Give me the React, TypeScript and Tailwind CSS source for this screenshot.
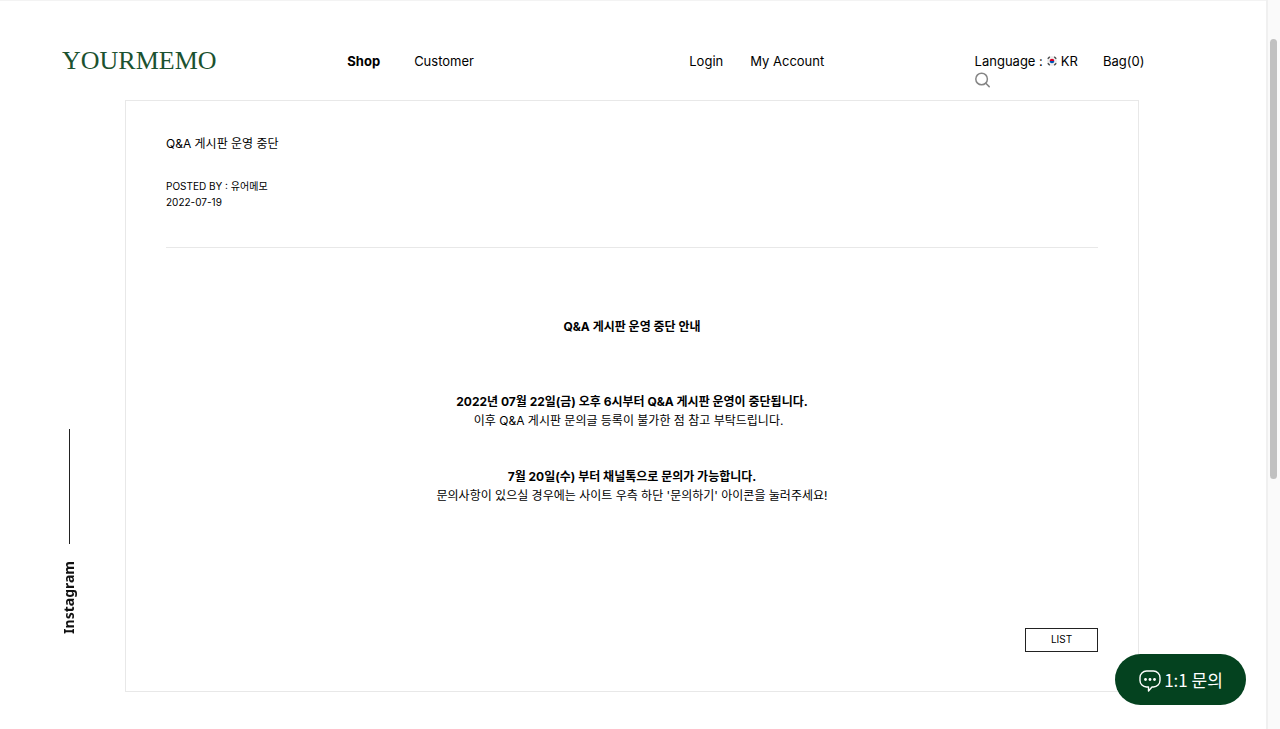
function KoreanFlag() {
  return (
    <svg className="h-[10px] w-[10px]" viewBox="0 0 20 20" aria-hidden="true">
      <circle cx="10" cy="10" r="10" fill="#eeeeee" />
      <path d="M5.300 10a4.700 4.700 0 0 1 9.400 0z" fill="#d80027" />
      <path d="M14.700 10a4.700 4.700 0 0 1-9.400 0z" fill="#0052b4" />
      <g stroke="#444" strokeWidth="2.600">
        <path d="M1.500 5.500 5.500 1.500M14.500 1.500l4 4M1.500 14.500l4 4M14.500 18.500l4-4" />
      </g>
    </svg>
  );
}

function SearchIcon() {
  return (
    <svg className="h-4 w-4" viewBox="0 0 16 16" fill="none" stroke="#858585" strokeWidth="1.500" aria-hidden="true">
      <circle cx="6.600" cy="7" r="5.800" />
      <path d="m10.800 11.200 3.400 3.400" strokeLinecap="round" />
    </svg>
  );
}

function ChatIcon() {
  return (
    <svg className="h-6 w-6" viewBox="0 0 24 24" fill="none" aria-hidden="true">
      <path
        d="M8.500 3h7a6.500 6.500 0 0 1 6.500 6.500v3a6.500 6.500 0 0 1-6.500 6.500h-1.500L10.500 23v-4h-2A6.500 6.500 0 0 1 2 12.500v-3A6.500 6.500 0 0 1 8.500 3z"
        stroke="#fff"
        strokeWidth="1.400"
        strokeLinejoin="round"
      />
      <g fill="#fff">
        <circle cx="7.500" cy="11.500" r="1.400" />
        <circle cx="12" cy="11.500" r="1.400" />
        <circle cx="16.500" cy="11.500" r="1.400" />
      </g>
    </svg>
  );
}

function Header() {
  return (
    <header className="flex h-[99px] items-start pt-[49px] pl-[62px] text-[13px] leading-[22px]">
      <a
        href="#home"
        className="w-[23.700%] font-['Liberation_Serif',serif] text-[26px] text-[#1b5230]"
      >
        YOURMEMO
      </a>
      <nav className="flex w-[28.400%] gap-[34px]" aria-label="Main">
        <a href="#shop" className="font-bold">Shop</a>
        <a href="#customer">Customer</a>
      </nav>
      <nav className="flex w-[23.700%] gap-[27px]" aria-label="Account">
        <a href="#login">Login</a>
        <a href="#account">My Account</a>
      </nav>
      <div>
        <div className="flex gap-[25px]">
          <a href="#language" className="flex items-center gap-1">
            <span>Language :</span>
            <KoreanFlag />
            <span>KR</span>
          </a>
          <a href="#bag">Bag(0)</a>
        </div>
        <button type="button" aria-label="Search" className="block">
          <SearchIcon />
        </button>
      </div>
    </header>
  );
}

function Post() {
  return (
    <main className="mr-[127px] ml-[125px] border border-[#e8e8e8] px-10 pt-[33px] pb-[39px]">
      <article>
        <header className="border-b border-[#e8e8e8] pb-[37px]">
          <h1 className="text-[12px] leading-5">Q&amp;A 게시판 운영 중단</h1>
          <p className="mt-6 text-[10px] leading-4">POSTED BY : 유어메모</p>
          <p className="text-[10px] leading-4">2022-07-19</p>
        </header>
        <div className="pt-[69px] text-center text-[12px] leading-[19px]">
          <h2 className="font-bold">Q&amp;A 게시판 운영 중단 안내</h2>
          <p className="mt-14">
            <strong>2022년 07월 22일(금) 오후 6시부터 Q&amp;A 게시판 운영이 중단됩니다.</strong>
            <br />
            이후 Q&amp;A 게시판 문의글 등록이 불가한 점 참고 부탁드립니다.&nbsp;&nbsp;
          </p>
          <p className="mt-[37px]">
            <strong>7월 20일(수) 부터 채널톡으로 문의가 가능합니다.</strong>
            <br />
            문의사항이 있으실 경우에는 사이트 우측 하단 '문의하기' 아이콘을 눌러주세요!
          </p>
        </div>
      </article>
      <div className="mt-[123px] flex justify-end">
        <a
          href="#list"
          className="flex h-6 w-[73px] items-center justify-center border border-[#222] pb-px text-[10px]"
        >
          LIST
        </a>
      </div>
    </main>
  );
}

export default function App() {
  return (
    <div className="flex min-h-screen bg-white font-[Inter,'Noto_Sans_CJK_KR',sans-serif] text-black">
      <div className="min-w-0 flex-1 border-t border-[#f3f3f3]">
        <Header />
        <Post />
      </div>

      <div className="w-[14px] border-l-2 border-[#f0f0f0] bg-[#fafafa] pt-[39px] pl-[2px]" aria-hidden="true">
        <div className="h-[440px] w-[7px] rounded-full bg-[#c1c1c1]" />
      </div>

      <a
        href="#instagram"
        className="fixed bottom-[95px] left-[60px] flex w-[18px] flex-col items-center gap-[17px] font-['Noto_Sans',sans-serif] text-[14px] leading-[18px] font-bold text-[#111]"
      >
        <span className="h-[115px] w-px bg-[#222]" />
        <span className="rotate-180 [writing-mode:vertical-rl]">Instagram</span>
      </a>

      <button
        type="button"
        className="fixed right-[34px] bottom-6 flex h-[51px] w-[131px] items-center justify-center gap-[2px] rounded-full bg-[#04421f] font-['Noto_Sans_CJK_KR',sans-serif] text-[17px] text-white"
      >
        <ChatIcon />
        <span>1:1 문의</span>
      </button>
    </div>
  );
}
